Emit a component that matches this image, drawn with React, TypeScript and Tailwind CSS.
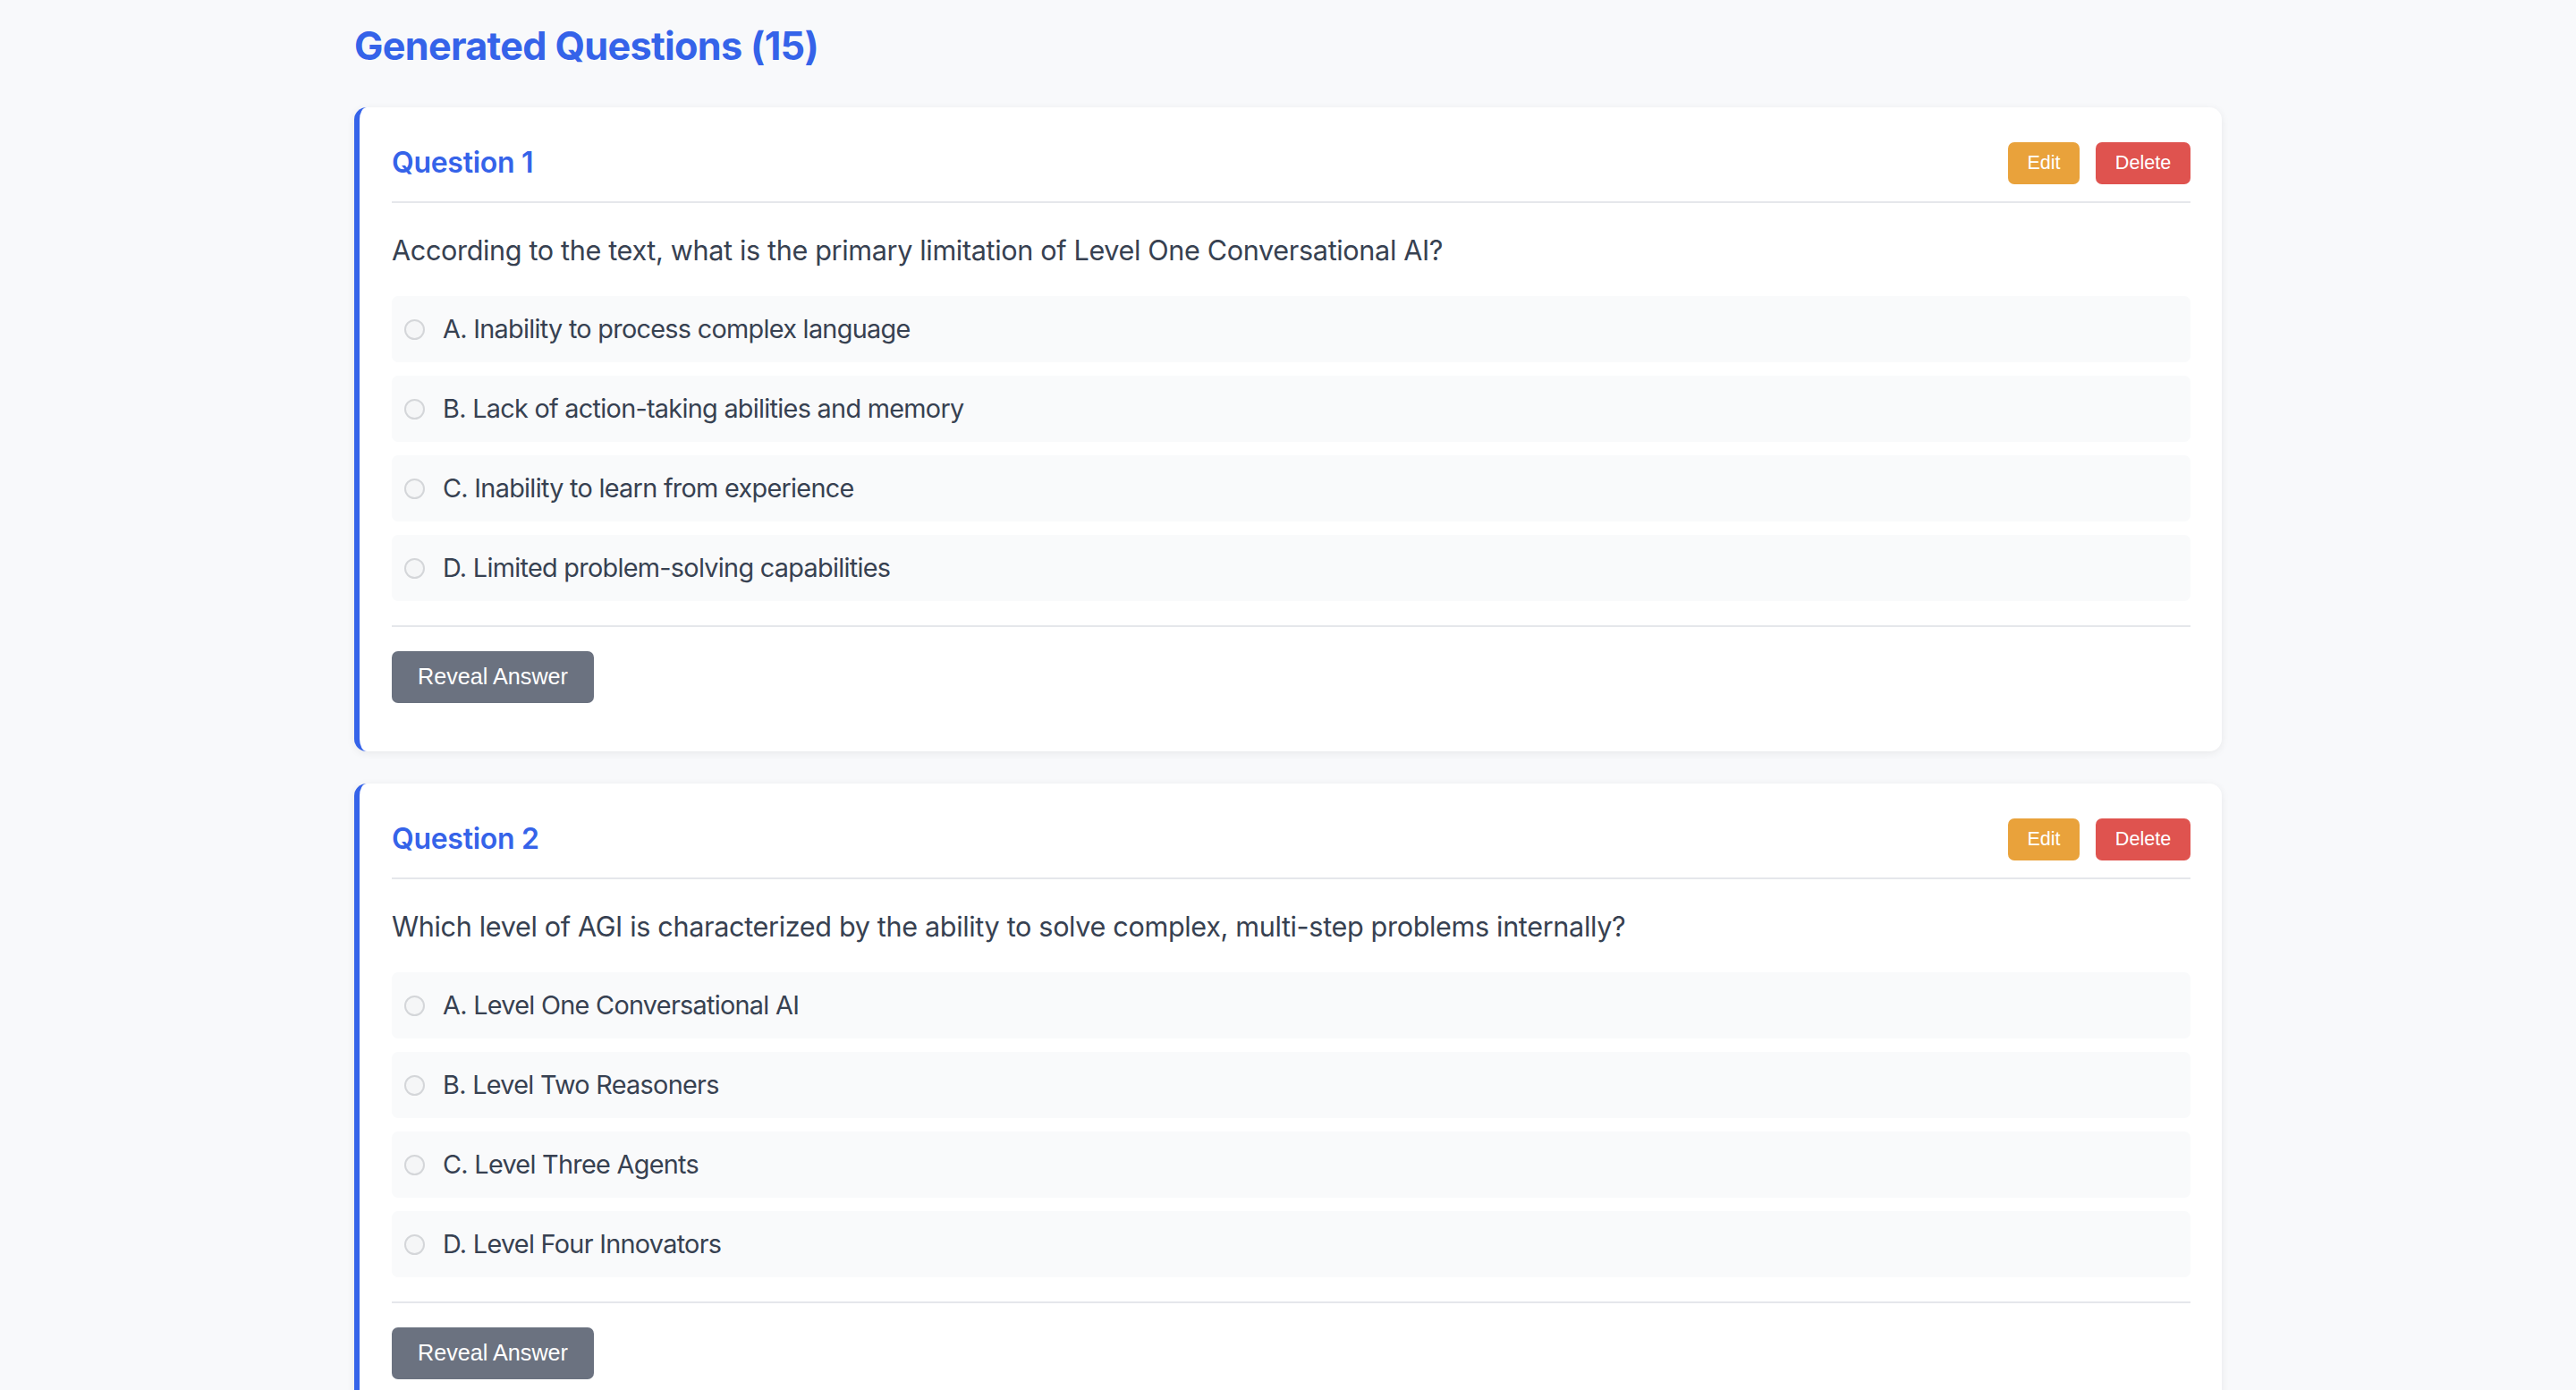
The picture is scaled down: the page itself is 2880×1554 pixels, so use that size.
import React from "react";

type Q = { title: string; text: string; options: string[] };

const questions: Q[] = [
  {
    title: "Question 1",
    text: "According to the text, what is the primary limitation of Level One Conversational AI?",
    options: [
      "A. Inability to process complex language",
      "B. Lack of action-taking abilities and memory",
      "C. Inability to learn from experience",
      "D. Limited problem-solving capabilities",
    ],
  },
  {
    title: "Question 2",
    text: "Which level of AGI is characterized by the ability to solve complex, multi-step problems internally?",
    options: [
      "A. Level One Conversational AI",
      "B. Level Two Reasoners",
      "C. Level Three Agents",
      "D. Level Four Innovators",
    ],
  },
];

function Card({ q }: { q: Q }) {
  return (
    <div className="bg-white rounded-[14px] border-l-[6px] border-[#3563e9] pl-[36px] pr-[35px] pt-[36px] pb-[54px] shadow-[0_2px_10px_rgba(0,0,0,0.07)]">
      <div className="flex items-center justify-between h-[52px] mb-[17px]">
        <h3 className="text-[32px] leading-[52px] font-semibold tracking-[-0.3px] text-[#3563e9] font-['Inter',sans-serif]">
          {q.title}
        </h3>
        <div className="flex items-center gap-[18px] font-['Liberation_Sans',Arial,sans-serif]">
          <button className="h-[47px] w-[80px] rounded-[7px] bg-[#e9a23b] text-white text-[21.6px]">
            Edit
          </button>
          <button className="h-[47px] w-[106px] rounded-[7px] bg-[#df534f] text-white text-[21.6px]">
            Delete
          </button>
        </div>
      </div>
      <div className="border-t-2 border-[#e5e7eb]" />
      <p className="mt-[28px] mb-[27px] text-[30.6px] leading-[49px] tracking-[-0.35px] text-[#374151] font-['Inter',sans-serif]">
        {q.text}
      </p>
      <div className="flex flex-col gap-[15px]">
        {q.options.map((o) => (
          <label
            key={o}
            className="flex items-center h-[74px] rounded-[7px] bg-[#f9fafb] pl-[14px] gap-[20px] text-[28.8px] tracking-[-0.7px] text-[#374151] font-['Inter',sans-serif]"
          >
            <span className="w-[23px] h-[23px] rounded-full border-2 border-[#d4d6d9] bg-[#f5f6f7] shrink-0" />
            <span>{o}</span>
          </label>
        ))}
      </div>
      <div className="mt-[27px] border-t-2 border-[#e5e7eb] pt-[27px]">
        <button className="h-[58px] px-[29px] rounded-[7px] bg-[#6b7280] text-white text-[25.2px] font-['Liberation_Sans',Arial,sans-serif]">
          Reveal Answer
        </button>
      </div>
    </div>
  );
}

export default function App() {
  return (
    <div className="min-h-screen bg-[#f8f9fb]">
      <div className="mx-auto w-[2088px] pt-[25px] pb-[40px]">
        <h2 className="text-[43.2px] leading-[52px] font-bold tracking-[-0.7px] text-[#3563e9] mb-[43px] font-['Inter',sans-serif]">
          Generated Questions (15)
        </h2>
        <div className="flex flex-col gap-[36px]">
          {questions.map((q) => (
            <Card key={q.title} q={q} />
          ))}
        </div>
      </div>
    </div>
  );
}
